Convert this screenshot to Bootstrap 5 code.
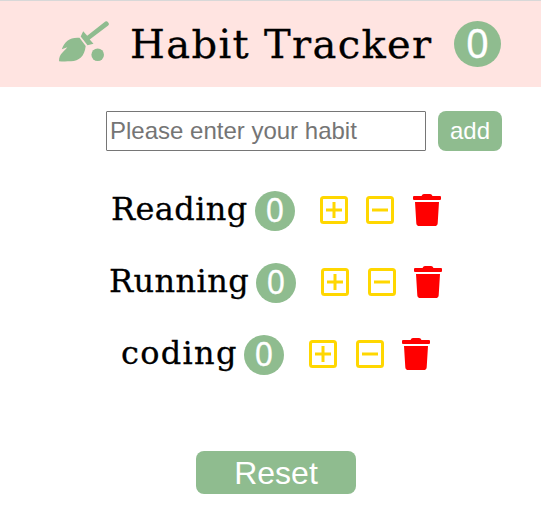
<!DOCTYPE html>
<html lang="en">
<head>
<meta charset="utf-8">
<meta name="viewport" content="width=device-width, initial-scale=1">
<title>Habit Tracker</title>
<link href="https://cdn.jsdelivr.net/npm/bootstrap@5.3.0/dist/css/bootstrap.min.css" rel="stylesheet">
<style>
:root { --sage: #8fbc8f; }
body { font-family: "Liberation Sans", Arial, sans-serif; background: #fff; color: #000; overflow: hidden; }
.site-head { height: 87px; background: #ffe4e1; border-top: 1px solid #d8d8d8; padding: 0 39px 0 58px; }
.brand-icon { width: 52px; height: 42px; fill: var(--sage); margin-right: 20px; margin-top: -4px; flex: none; }
.site-title { font: 400 40px/60px "DejaVu Serif", serif; letter-spacing: 1.35px; white-space: nowrap; width: 304px; flex: none; -webkit-text-stroke: .3px #000; }
.count { display: flex; align-items: center; justify-content: center; border-radius: 50%; background: var(--sage); color: #fff; font-family: "Noto Sans", sans-serif; flex: none; -webkit-text-stroke: .3px #fff; }
.count-total { width: 47px; height: 46px; font-size: 40px; line-height: 43px; padding-bottom: 3px; margin-left: 20px; }
.count-item { width: 40px; height: 40px; font-size: 32px; line-height: 38px; padding-bottom: 2px; }
.habit-form { padding: 24px 0 0 106px; gap: 12px; }
.habit-input { width: 320px; height: 40px; border: 1px solid #767676; border-radius: 1px; padding: 1px 3px; font-size: 24px; }
.habit-input::placeholder { color: #757575; opacity: 1; }
.btn-sage, .btn-sage:hover { background: var(--sage); color: #fff; border: 0; border-radius: 8px; padding: 0; }
.btn-add { width: 64px; height: 40px; font-size: 24px; line-height: 40px; }
.btn-reset { width: 160px; height: 43px; font-size: 32px; line-height: 42px; }
.habits { padding-top: 40px; }
.habit { height: 40px; margin-bottom: 32px; }
.habit-name { font: 400 32px/38px "DejaVu Serif", serif; padding-bottom: 4px; margin-right: 6px; white-space: nowrap; -webkit-text-stroke: .3px #000; }
.habit:nth-child(1) { padding-left: 111px; }
.habit:nth-child(2) { padding-left: 109px; }
.habit:nth-child(3) { padding-left: 121px; }
.habit:nth-child(1) .habit-name { width: 138px; letter-spacing: .4px; }
.habit:nth-child(2) .habit-name { width: 141px; letter-spacing: .4px; }
.habit:nth-child(3) .habit-name { width: 117px; letter-spacing: 1.3px; }
.icon-btn { border: 0; background: none; padding: 0; line-height: 0; display: block; }
.icon-box { width: 28px; height: 28px; fill: none; stroke: #ffd700; stroke-width: 3; }
.icon-bin { width: 28px; height: 32px; fill: red; }
.actions { gap: 18.500px; margin-left: 25px; margin-top: -2px; padding-bottom: 1px; }
.habit:nth-child(1) .icon-btn:nth-child(2) { margin-left: -1px; margin-right: 1px; }
.reset-row { padding: 28px 0 0 196px; }
</style>
</head>
<body>
<header class="site-head d-flex align-items-center">
  <svg class="brand-icon" viewBox="0 0 52 42" aria-hidden="true">
    <path d="M47.300 .6 Q48.800 -.3 50 1.200 L50.800 2.500 Q51.300 3.500 50.200 4.400 L31.700 18.500 L35.500 22.700 L29.500 24.200 L22.700 15.500 L25.200 10.300 L29.200 14.800 Z"/>
    <path d="M21.500 16.800 L27.700 25 C26.500 35.500 21 40 13 40.300 C8 40.500 4 40.500 1 40.200 C1 36.500 2.200 33.800 4.500 31.500 C6.500 29.300 8 28 9.300 26.300 L3.800 28.200 C6.500 20.500 12 16 21.500 16.800 Z"/>
    <circle cx="39.700" cy="33.800" r="6.300"/>
  </svg>
  <h1 class="site-title m-0">Habit Tracker</h1>
  <span class="count count-total">0</span>
</header>
<main>
  <form class="habit-form d-flex">
    <input class="habit-input" type="text" placeholder="Please enter your habit" aria-label="Habit">
    <button class="btn btn-sage btn-add" type="button">add</button>
  </form>
  <ul class="habits list-unstyled m-0">
    <li class="habit d-flex align-items-center">
      <span class="habit-name">Reading</span><span class="count count-item">0</span>
      <div class="actions d-flex align-items-center">
        <button class="icon-btn" aria-label="Increase"><svg class="icon-box" viewBox="0 0 28 28"><rect x="1.500" y="1.500" width="25" height="25" rx="2"/><path d="M6 14H22M14 6V22"/></svg></button>
        <button class="icon-btn" aria-label="Decrease"><svg class="icon-box" viewBox="0 0 28 28"><rect x="1.500" y="1.500" width="25" height="25" rx="2"/><path d="M6 14H22"/></svg></button>
        <button class="icon-btn" aria-label="Delete"><svg class="icon-bin" viewBox="0 0 28 32"><path d="M1 2H8.500L9.500 .6Q10 0 11 0H17Q18 0 18.500 .6L19.500 2H27Q28 2 28 3V5Q28 6 27 6H1Q0 6 0 5V3Q0 2 1 2ZM2 8H26L24.700 29.200Q24.500 32 21.700 32H6.300Q3.500 32 3.300 29.200Z"/></svg></button>
      </div>
    </li>
    <li class="habit d-flex align-items-center">
      <span class="habit-name">Running</span><span class="count count-item">0</span>
      <div class="actions d-flex align-items-center">
        <button class="icon-btn" aria-label="Increase"><svg class="icon-box" viewBox="0 0 28 28"><rect x="1.500" y="1.500" width="25" height="25" rx="2"/><path d="M6 14H22M14 6V22"/></svg></button>
        <button class="icon-btn" aria-label="Decrease"><svg class="icon-box" viewBox="0 0 28 28"><rect x="1.500" y="1.500" width="25" height="25" rx="2"/><path d="M6 14H22"/></svg></button>
        <button class="icon-btn" aria-label="Delete"><svg class="icon-bin" viewBox="0 0 28 32"><path d="M1 2H8.500L9.500 .6Q10 0 11 0H17Q18 0 18.500 .6L19.500 2H27Q28 2 28 3V5Q28 6 27 6H1Q0 6 0 5V3Q0 2 1 2ZM2 8H26L24.700 29.200Q24.500 32 21.700 32H6.300Q3.500 32 3.300 29.200Z"/></svg></button>
      </div>
    </li>
    <li class="habit d-flex align-items-center">
      <span class="habit-name">coding</span><span class="count count-item">0</span>
      <div class="actions d-flex align-items-center">
        <button class="icon-btn" aria-label="Increase"><svg class="icon-box" viewBox="0 0 28 28"><rect x="1.500" y="1.500" width="25" height="25" rx="2"/><path d="M6 14H22M14 6V22"/></svg></button>
        <button class="icon-btn" aria-label="Decrease"><svg class="icon-box" viewBox="0 0 28 28"><rect x="1.500" y="1.500" width="25" height="25" rx="2"/><path d="M6 14H22"/></svg></button>
        <button class="icon-btn" aria-label="Delete"><svg class="icon-bin" viewBox="0 0 28 32"><path d="M1 2H8.500L9.500 .6Q10 0 11 0H17Q18 0 18.500 .6L19.500 2H27Q28 2 28 3V5Q28 6 27 6H1Q0 6 0 5V3Q0 2 1 2ZM2 8H26L24.700 29.200Q24.500 32 21.700 32H6.300Q3.500 32 3.300 29.200Z"/></svg></button>
      </div>
    </li>
  </ul>
  <div class="reset-row d-flex mt-5"><button class="btn btn-sage btn-reset" type="button">Reset</button></div>
</main>
<script src="https://cdn.jsdelivr.net/npm/bootstrap@5.3.0/dist/js/bootstrap.bundle.min.js"></script>
</body>
</html>
